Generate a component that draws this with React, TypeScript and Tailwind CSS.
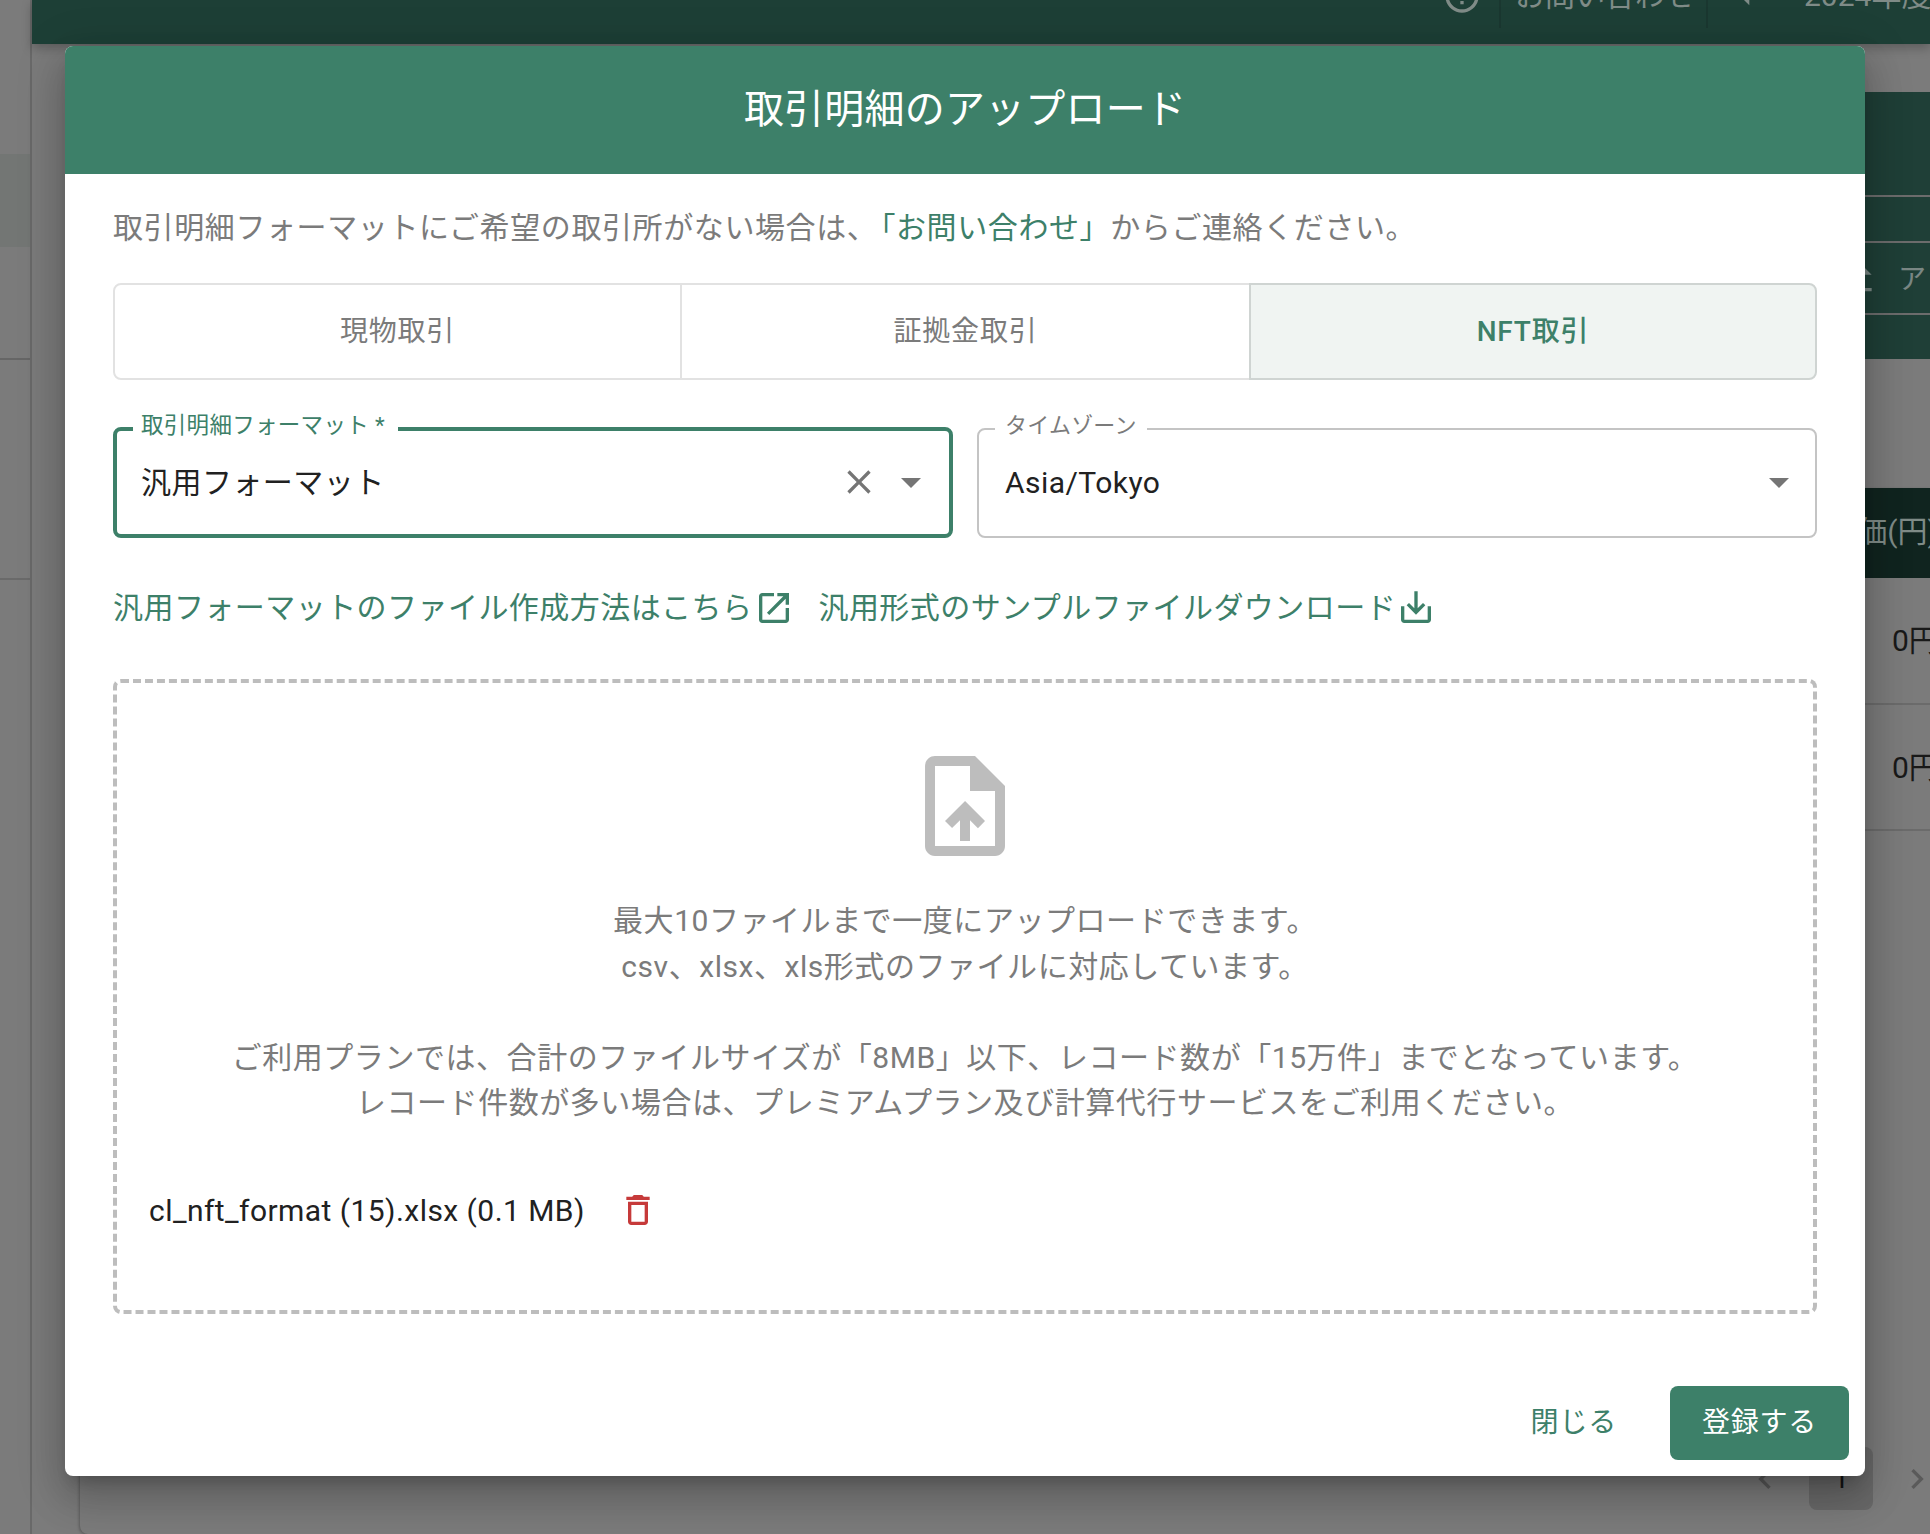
import React from 'react';

const ICONS = {
  openInNew: 'M19 19H5V5h7V3H5c-1.11 0-2 .9-2 2v14c0 1.1.89 2 2 2h14c1.1 0 2-.9 2-2v-7h-2zM14 3v2h3.59l-9.83 9.83 1.41 1.41L19 6.41V10h2V3z',
  download: 'M3 11v8c0 1.1.9 2 2 2h14c1.1 0 2-.9 2-2v-8h-2v8H5v-8zM11 2v10.2L7.8 9l-1.4 1.4L12 16l5.6-5.6L16.2 9 13 12.2V2z',
  uploadFile: 'M14 2H6c-1.1 0-1.99.9-1.99 2L4 20c0 1.1.89 2 1.99 2H18c1.1 0 2-.9 2-2V8zm4 18H6V4h7v5h5zM8 15.01l1.41 1.41L11 14.84V19h2v-4.16l1.59 1.59L16 15.01 12.01 11z',
  trash: 'M16 9v10H8V9zm-1.5-6h-5l-1 1H5v2h14V4h-3.5zM18 7H6v12c0 1.1.9 2 2 2h8c1.1 0 2-.9 2-2z',
  clear: 'M19 6.41 17.59 5 12 10.59 6.41 5 5 6.41 10.59 12 5 17.59 6.41 19 12 13.41 17.59 19 19 17.59 13.41 12z',
  dropDown: 'm7 10 5 5 5-5z',
  prev: 'M15.41 7.41 14 6l-6 6 6 6 1.41-1.41L10.83 12z',
  next: 'M10 6 8.59 7.41 13.17 12l-4.58 4.59L10 18l6-6z',
  errorOutline: 'M11 15h2v2h-2zm0-8h2v6h-2zm.99-5C6.47 2 2 6.48 2 12s4.47 10 9.99 10C17.52 22 22 17.52 22 12S17.52 2 11.99 2M12 20c-4.42 0-8-3.58-8-8s3.58-8 8-8 8 3.58 8 8-3.58 8-8 8',
  leftTri: 'M14 7l-5 5 5 5z',
  fileUpload: 'M9 16h6v-6h4l-7-7-7 7h4zm-4 2h14v2H5z',
};

const Icon = ({ d, className }: { d: string; className: string }) => (
  <svg viewBox="0 0 24 24" fill="currentColor" className={`shrink-0 ${className}`}>
    <path d={d} />
  </svg>
);

const Tab = ({ label, active, className }: { label: string; active?: boolean; className: string }) => (
  <button
    className={`h-[97px] border-2 text-[28px] tracking-[0.8px] ${className} ${
      active
        ? 'border-[#cfd4d2] bg-[#f0f4f2] font-medium text-[#3d8069]'
        : 'border-[#e2e2e2] bg-white text-[#7b7b7b]'
    }`}
  >
    {label}
  </button>
);

// background page that sits behind the dialog
const BackgroundPage = () => (
  <>
    <div className="flex w-[32px] shrink-0 flex-col border-r-2 border-[#696969]">
      <div className="h-[154px]" />
      <div className="h-[93px] bg-[#737674]" />
      <div className="h-[113px] border-b-2 border-[#666666]" />
      <div className="h-[220px] border-b-2 border-[#6a6a6a]" />
    </div>
    <div className="flex min-w-0 flex-1 flex-col">
      <div className="flex h-[44px] items-start justify-end bg-[#1d3f36] text-[30px] leading-[36px] text-[#7f8b87] shadow-[0_4px_10px_rgba(0,0,0,0.25)]">
        <div className="flex h-[28px] items-end">
          <Icon d={ICONS.errorOutline} className="mb-[12px] mr-[17px] h-[40px] w-[40px]" />
          <div className="h-[28px] w-[2px] bg-[#1a3730]" />
          <div className="mb-[14px] w-[205px] whitespace-nowrap pl-[14px]">お問い合わせ</div>
          <div className="h-[28px] w-[2px] bg-[#1a3730]" />
          <Icon d={ICONS.leftTri} className="mb-[11px] ml-[18px] h-[40px] w-[40px]" />
          <div className="mb-[14px] ml-[38px] w-[126px] whitespace-nowrap">2024年度</div>
        </div>
      </div>
      <div className="ml-[48px] mt-[48px] flex h-[267px] flex-col bg-[#1f3f37]">
        <div className="h-[105px] border-b-2 border-[#6c6c6c]" />
        <div className="h-[46px] border-b-2 border-[#6c6c6c]" />
        <div className="flex h-[72px] items-center justify-end border-b-2 border-[#6c6c6c] pr-[4px] text-[28px] text-[#7a8784]">
          <Icon d={ICONS.fileUpload} className="mr-[18px] h-[40px] w-[40px]" />
          <span className="mt-[4px] whitespace-nowrap">ア</span>
        </div>
      </div>
      <div className="ml-[48px] mt-[129px] flex h-[1046px] flex-col rounded-bl-[8px] shadow-[-1px_1px_3px_rgba(0,0,0,0.25)]">
        <div className="flex h-[90px] items-center justify-end bg-[#10241f] pb-[4px] text-[30px] text-[#7f8b87]">
          <span className="mr-[-8px] whitespace-nowrap">価(円)</span>
        </div>
        <div className="flex h-[127px] items-center justify-end border-b-2 border-[#6b6b6b] text-[30px] text-[#191919]">
          <span className="w-[38px] whitespace-nowrap">0円</span>
        </div>
        <div className="flex h-[126px] items-center justify-end border-b-2 border-[#6b6b6b] text-[30px] text-[#191919]">
          <span className="w-[38px] whitespace-nowrap">0円</span>
        </div>
        <div className="mt-[616px] flex items-center justify-end text-[#5a5a5a]">
          <Icon d={ICONS.prev} className="h-[40px] w-[40px]" />
          <div className="ml-[24px] flex h-[63px] w-[64px] items-center justify-center rounded-[8px] bg-[#696969] text-[28px] text-[#141414]">
            1
          </div>
          <Icon d={ICONS.next} className="ml-[24px] mr-[-7px] h-[40px] w-[40px]" />
        </div>
      </div>
    </div>
  </>
);

const App: React.FC = () => {
  return (
    <div className="relative flex h-[1534px] w-[1930px] overflow-hidden bg-[#7b7b7b] font-['Roboto','Noto_Sans_CJK_JP',sans-serif] [text-spacing-trim:space-all]">
      <BackgroundPage />

      <div className="absolute left-[65px] top-[46px] flex h-[1430px] w-[1800px] flex-col overflow-hidden rounded-[8px] bg-white shadow-[0_11px_15px_-7px_rgba(0,0,0,0.2),0_24px_38px_3px_rgba(0,0,0,0.14),0_9px_46px_8px_rgba(0,0,0,0.12)]">
        {/* Header */}
        <div className="flex h-[128px] shrink-0 items-center justify-center bg-[#3d8069] text-[40px] tracking-[0.2px] text-white">
          取引明細のアップロード
        </div>

        <div className="flex flex-col px-[48px] pt-[31px]">
          <p className="text-[30px] leading-[45px] tracking-[0.6px] text-[#7b7b7b]">
            取引明細フォーマットにご希望の取引所がない場合は、
            <span className="-ml-[12px] text-[#3d8069]">「お問い合わせ」</span>
            からご連絡ください。
          </p>

          {/* Tabs */}
          <div className="mt-[33px] flex">
            <Tab label="現物取引" className="w-[569px] rounded-l-[8px]" />
            <Tab label="証拠金取引" className="w-[567px] border-x-0" />
            <Tab label="NFT取引" active className="w-[568px] rounded-r-[8px]" />
          </div>

          {/* Selects */}
          <div className="mt-[32px] grid grid-cols-2 gap-[24px]">
            <fieldset className="h-[126px] rounded-[8px] border-[4px] border-[#3d8069]">
              <legend className="ml-[16px] pl-[8px] pr-[13px] text-[22.5px] leading-[34px] tracking-[0.3px] text-[#3d8069]">
                <span className="relative -top-[4px]">取引明細フォーマット *</span>
              </legend>
              <div className="flex h-[72px] items-center pl-[24px] pr-[14px]">
                <span className="flex-1 text-[30px] tracking-[0.45px] text-[#212121]">汎用フォーマット</span>
                <Icon d={ICONS.clear} className="h-[40px] w-[40px] text-[#757575]" />
                <Icon d={ICONS.dropDown} className="ml-[8px] h-[48px] w-[48px] text-[#757575]" />
              </div>
            </fieldset>
            <fieldset className="h-[126px] rounded-[8px] border-2 border-[#c4c4c4]">
              <legend className="ml-[16px] px-[10px] text-[22px] leading-[34px] tracking-[0.2px] text-[#7b7b7b]">
                <span className="relative -top-[3px]">タイムゾーン</span>
              </legend>
              <div className="flex h-[72px] items-center pl-[26px] pr-[12px]">
                <span className="flex-1 text-[30px] tracking-[0.45px] text-[#212121]">Asia/Tokyo</span>
                <Icon d={ICONS.dropDown} className="h-[48px] w-[48px] text-[#757575]" />
              </div>
            </fieldset>
          </div>

          {/* Links */}
          <div className="mt-[47px] flex h-[45px] items-center text-[30px] tracking-[0.45px] text-[#3d8069]">
            <span className="whitespace-nowrap">汎用フォーマットのファイル作成方法はこちら</span>
            <Icon d={ICONS.openInNew} className="ml-[2px] h-[40px] w-[40px]" />
            <span className="ml-[24px] whitespace-nowrap">汎用形式のサンプルファイルダウンロード</span>
            <Icon d={ICONS.download} className="h-[40px] w-[40px]" />
          </div>

          {/* Dropzone */}
          <div className="mt-[49px] flex h-[635px] flex-col rounded-[8px] border-[4px] border-dashed border-[#bdbdbd] pt-[63px]">
            <Icon d={ICONS.uploadFile} className="mx-auto h-[120px] w-[120px] text-[#bdbdbd]" />
            <p className="mt-[32px] text-center text-[30px] leading-[45.5px] tracking-[0.55px] text-[#7b7b7b]">
              最大10ファイルまで一度にアップロードできます。
              <br />
              csv、xlsx、xls形式のファイルに対応しています。
              <br />
              <br />
              ご利用プランでは、合計のファイルサイズが「8MB」以下、レコード数が「15万件」までとなっています。
              <br />
              レコード件数が多い場合は、プレミアムプラン及び計算代行サービスをご利用ください。
            </p>
            <div className="mt-[62px] flex items-center pl-[32px] text-[30px] leading-[45px] tracking-[0.45px] text-[#212121]">
              <span>cl_nft_format (15).xlsx (0.1 MB)</span>
              <Icon d={ICONS.trash} className="ml-[33px] h-[40px] w-[40px] text-[#c63a3a]" />
            </div>
          </div>
        </div>

        {/* Footer */}
        <div className="mt-auto flex items-center justify-end gap-[53px] pb-[16px] pr-[16px] text-[28px] tracking-[0.8px]">
          <button className="text-[#3d8069]">閉じる</button>
          <button className="flex h-[74px] w-[179px] items-center justify-center rounded-[8px] bg-[#3d8069] text-white">
            登録する
          </button>
        </div>
      </div>
    </div>
  );
};

export default App;
